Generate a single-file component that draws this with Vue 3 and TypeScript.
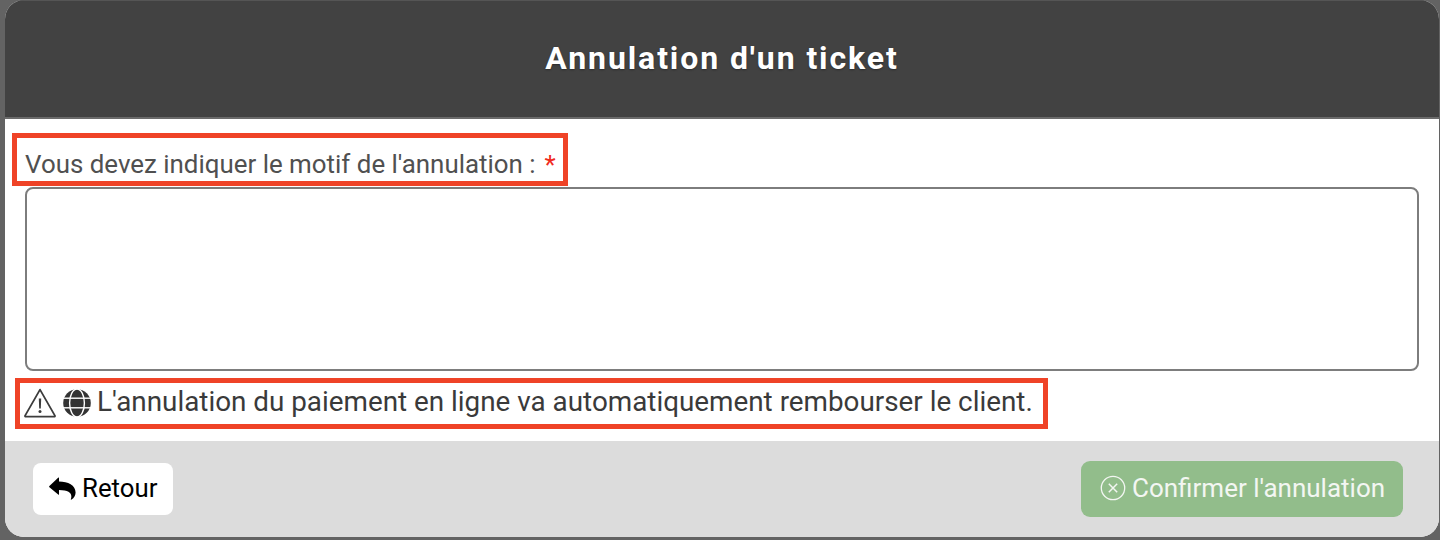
<script setup lang="ts">
import { ref } from "vue";

const reason = ref("");
</script>

<template>
  <div class="page">
    <div class="modal">
      <header class="modal-header">
        <h1>Annulation d'un ticket</h1>
      </header>

      <div class="modal-body">
        <label class="reason-label" for="reason">
          Vous devez indiquer le motif de l'annulation :<span class="required">*</span>
        </label>
        <textarea id="reason" v-model="reason" class="reason-input"></textarea>
        <div class="warning">
          <svg class="warn-icon" viewBox="0 0 32 30" width="32" height="30" aria-hidden="true">
            <path d="M16 1.6 L30.9 27.6 Q31.3 28.6 30.1 28.6 H1.9 Q0.7 28.6 1.1 27.6 Z" fill="none" stroke="#3c3c3c" stroke-width="1.8" stroke-linejoin="round" />
            <path d="M14.8 10.5 h2.4 l-.4 10 h-1.6 z" fill="#3c3c3c" />
            <circle cx="16" cy="23.6" r="1.5" fill="#3c3c3c" />
          </svg>
          <svg class="globe-icon" viewBox="0 0 28 28" width="28" height="28" aria-hidden="true">
            <circle cx="14" cy="14" r="13.8" fill="#333" />
            <g fill="none" stroke="#fff" stroke-width="1.4">
              <ellipse cx="14" cy="14" rx="7.4" ry="14" />
              <path d="M0 9.2 H28" />
              <path d="M0 18.8 H28" />
            </g>
          </svg>
          <span class="warning-text">L'annulation du paiement en ligne va automatiquement rembourser le client.</span>
        </div>
      </div>

      <footer class="modal-footer">
        <button class="btn btn-back" type="button">
          <svg viewBox="0 0 27 23" width="27" height="23" aria-hidden="true">
            <path d="M0.4 9 L9.4 0.6 Q10 0.2 10 1 V4.4 C19 4.6 26.6 8 26.6 15.5 C26.6 18.2 25 21 22.6 22.6 C22 23 21.6 22.6 21.9 22 C23.6 16.6 20.6 13.2 10 13 V17.2 Q10 18.2 9.2 17.6 L0.4 10.2 Q-0.2 9.6 0.4 9 Z" fill="#000" />
          </svg>
          Retour
        </button>
        <button class="btn btn-confirm" type="button">
          <svg viewBox="0 0 26 26" width="26" height="26" aria-hidden="true">
            <circle cx="13" cy="13" r="11.7" fill="none" stroke="currentColor" stroke-width="1.3" />
            <path d="M8.8 8.8 L17.2 17.2 M17.2 8.8 L8.8 17.2" fill="none" stroke="currentColor" stroke-width="1.5" />
          </svg>
          Confirmer l'annulation
        </button>
      </footer>
    </div>
  </div>
</template>

<style>
html,
body {
  margin: 0;
  background: #636363;
}
</style>

<style scoped>
.page {
  height: 540px;
  box-sizing: border-box;
  padding: 0 1px 3px 5px;
  background: #636363;
  font-family: Roboto, "Liberation Sans", sans-serif;
}

.modal {
  height: 537px;
  display: flex;
  flex-direction: column;
  border-radius: 19px;
  overflow: hidden;
  background: #fff;
}

.modal-header {
  height: 119px;
  flex: none;
  box-sizing: border-box;
  display: flex;
  align-items: center;
  justify-content: center;
  padding-bottom: 3px;
  background: #424242;
  border-top: 1px solid #555;
  border-bottom: 2px solid #6b6b6b;
}

.modal-header h1 {
  margin: 0;
  color: #fff;
  font-size: 32px;
  font-weight: 700;
  letter-spacing: 1.9px;
  text-shadow: 0 1px 2px rgba(0, 0, 0, 0.35);
}

.modal-body {
  flex: 1;
  display: flex;
  flex-direction: column;
  align-items: flex-start;
  padding: 14px 20px 0 7px;
}

.reason-label {
  box-sizing: border-box;
  width: 556px;
  height: 53px;
  display: block;
  padding: 11px 0 0 8px;
  border: 5px solid #ef4327;
  color: #505050;
  font-size: 25.9px;
  line-height: 30px;
  white-space: nowrap;
}

.required {
  margin-left: 9px;
  color: #f02b1d;
}

.reason-input {
  box-sizing: border-box;
  width: 1394px;
  height: 184px;
  flex: none;
  margin: 1px 0 0 13px;
  padding: 8px;
  border: 2px solid #7d7d7d;
  border-radius: 8px;
  background: #fff;
  resize: none;
  outline: none;
}

.warning {
  box-sizing: border-box;
  width: 1033px;
  height: 51px;
  display: flex;
  align-items: center;
  gap: 6px;
  margin: 7px 0 0 3px;
  padding-left: 4px;
  border: 5px solid #ef4327;
  color: #3a3a3a;
  font-size: 27.83px;
  white-space: nowrap;
}

.warning-text {
  margin-top: -4px;
}

.warn-icon {
  flex: none;
  margin-top: -2px;
  margin-right: 1px;
}

.globe-icon {
  flex: none;
  margin-top: -2px;
}

.modal-footer {
  height: 96px;
  flex: none;
  box-sizing: border-box;
  display: flex;
  align-items: center;
  justify-content: space-between;
  padding: 0 36px 0 28px;
  background: #dcdcdc;
}

.btn {
  display: flex;
  align-items: center;
  border: none;
  font-family: inherit;
  line-height: 28px;
  white-space: nowrap;
}

.btn-back {
  width: 140px;
  height: 52px;
  gap: 6px;
  padding: 0 0 2px 16px;
  border-radius: 8px;
  background: #fff;
  color: #000;
  font-size: 25.8px;
}

.btn-confirm {
  width: 322px;
  height: 56px;
  gap: 6px;
  padding: 0 0 2px 19px;
  border-radius: 9px;
  background: #92bd8b;
  color: #f3f6f2;
  font-size: 26px;
}
</style>
